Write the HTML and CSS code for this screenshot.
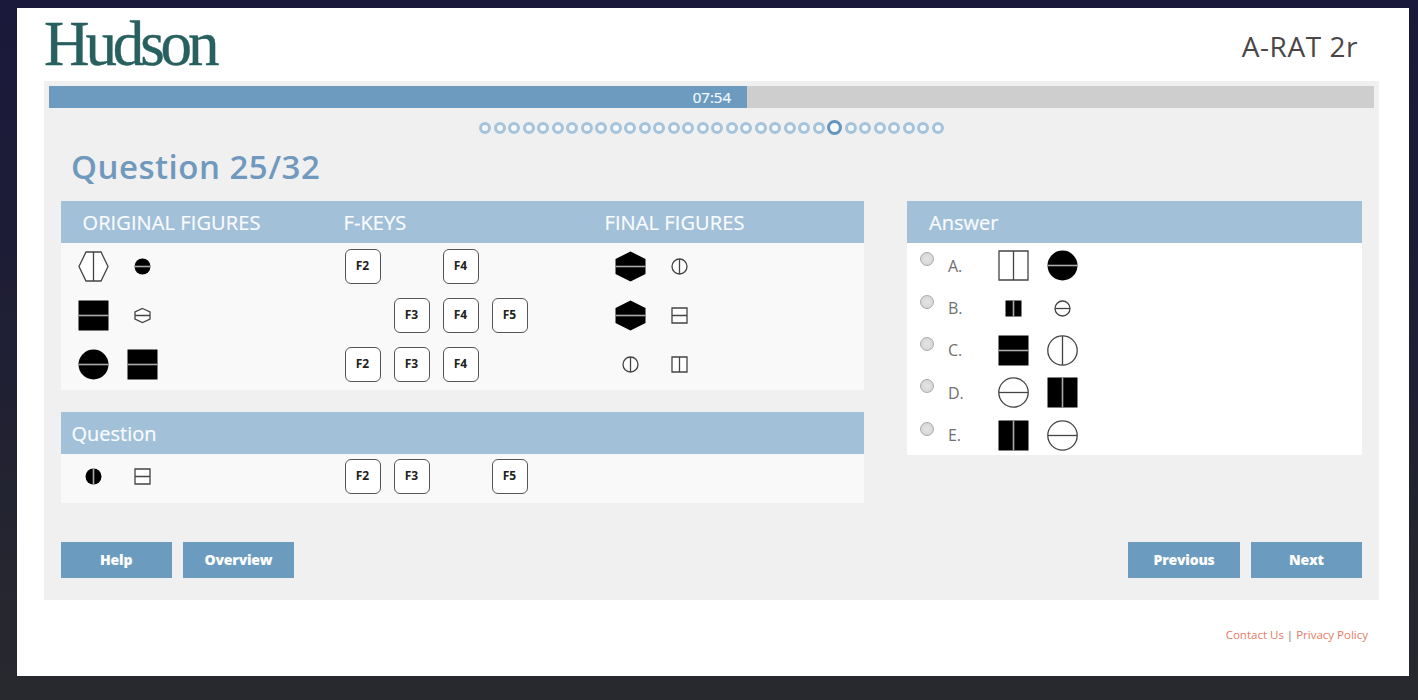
FILE: index.html
```html
<!DOCTYPE html>
<html lang="en">
<head>
<meta charset="utf-8">
<title>A-RAT 2r</title>
<link rel="stylesheet" href="styles.css">
</head>
<body>
<svg class="defs" width="0" height="0" aria-hidden="true">
  <g id="sq-h-fill"><rect x="-15" y="-15" width="30" height="30"/><path class="split" d="M-15 0H15"/></g>
  <g id="sq-v-fill"><rect x="-15" y="-15" width="30" height="30"/><path class="split" d="M0-15V15"/></g>
  <g id="sq-v-fill-s"><rect x="-8" y="-8" width="16" height="16"/><path class="split" d="M0-8V8"/></g>
  <g id="ci-h-fill"><circle r="15"/><path class="split" d="M-15 0H15"/></g>
  <g id="ci-h-fill-s"><circle r="8"/><path class="split" d="M-8 0H8"/></g>
  <g id="ci-v-fill-s"><circle r="8"/><path class="split" d="M0-8V8"/></g>
  <g id="hex-h-fill"><path d="M0-15L15-7.5V7.5L0 15L-15 7.5V-7.5Z"/><path class="split" d="M-15 0H15"/></g>
  <g id="hex-v" class="line"><path d="M-14.5 0L-7.5-14.5H7.5L14.5 0L7.5 14.5H-7.5ZM0-14.5V14.5"/></g>
  <g id="hex-h-s" class="line"><path d="M0-7L7.5-3.5V3.5L0 7L-7.5 3.5V-3.5ZM-7.5 0H7.5"/></g>
  <g id="sq-v" class="line"><path d="M-14.5-14.5H14.5V14.5H-14.5ZM0-14.5V14.5"/></g>
  <g id="sq-h-s" class="line"><path d="M-7.5-7.5H7.5V7.5H-7.5ZM-7.5 0H7.5"/></g>
  <g id="sq-v-s" class="line"><path d="M-7.5-7.5H7.5V7.5H-7.5ZM0-7.5V7.5"/></g>
  <g id="ci-h" class="line"><circle r="14.7"/><path d="M-14.5 0H14.5"/></g>
  <g id="ci-v" class="line"><circle r="14.7"/><path d="M0-14.5V14.5"/></g>
  <g id="ci-h-s" class="line"><circle r="7.5"/><path d="M-7.5 0H7.5"/></g>
  <g id="ci-v-s" class="line"><circle r="7.5"/><path d="M0-7.5V7.5"/></g>
</svg>
<main class="page">
  <header class="top">
    <div class="logo">Hudson</div>
    <div class="test-name">A-RAT 2r</div>
  </header>
  <section class="panel">
    <div class="timer"><div class="timer-fill" style="width:52.68%"><span>07:54</span></div></div>
    <div class="dots">
      <i></i><i></i><i></i><i></i><i></i><i></i><i></i><i></i><i></i><i></i><i></i><i></i>
      <i></i><i></i><i></i><i></i><i></i><i></i><i></i><i></i><i></i><i></i><i></i><i></i>
      <i class="current"></i><i></i><i></i><i></i><i></i><i></i><i></i><i></i>
    </div>
    <h1 class="heading"><span>Question 25/32</span></h1>
    <div class="columns">
      <div class="left">
        <div class="box">
          <div class="box-head cols"><span>ORIGINAL FIGURES</span><span>F-KEYS</span><span>FINAL FIGURES</span></div>
          <div class="row">
            <div class="cells"><svg class="fig" viewBox="-24.5 -24.5 49 49"><use href="#hex-v"/></svg><svg class="fig" viewBox="-24.5 -24.5 49 49"><use href="#ci-h-fill-s"/></svg></div>
            <div class="cells"><kbd class="f2">F2</kbd><kbd class="f4">F4</kbd></div>
            <div class="cells"><svg class="fig" viewBox="-24.5 -24.5 49 49"><use href="#hex-h-fill"/></svg><svg class="fig" viewBox="-24.5 -24.5 49 49"><use href="#ci-v-s"/></svg></div>
          </div>
          <div class="row">
            <div class="cells"><svg class="fig" viewBox="-24.5 -24.5 49 49"><use href="#sq-h-fill"/></svg><svg class="fig" viewBox="-24.5 -24.5 49 49"><use href="#hex-h-s"/></svg></div>
            <div class="cells"><kbd class="f3">F3</kbd><kbd class="f4">F4</kbd><kbd class="f5">F5</kbd></div>
            <div class="cells"><svg class="fig" viewBox="-24.5 -24.5 49 49"><use href="#hex-h-fill"/></svg><svg class="fig" viewBox="-24.5 -24.5 49 49"><use href="#sq-h-s"/></svg></div>
          </div>
          <div class="row">
            <div class="cells"><svg class="fig" viewBox="-24.5 -24.5 49 49"><use href="#ci-h-fill"/></svg><svg class="fig" viewBox="-24.5 -24.5 49 49"><use href="#sq-h-fill"/></svg></div>
            <div class="cells"><kbd class="f2">F2</kbd><kbd class="f3">F3</kbd><kbd class="f4">F4</kbd></div>
            <div class="cells"><svg class="fig" viewBox="-24.5 -24.5 49 49"><use href="#ci-v-s"/></svg><svg class="fig" viewBox="-24.5 -24.5 49 49"><use href="#sq-v-s"/></svg></div>
          </div>
        </div>
        <div class="box">
          <div class="box-head question-head"><span>Question</span></div>
          <div class="row">
            <div class="cells"><svg class="fig" viewBox="-24.5 -24.5 49 49"><use href="#ci-v-fill-s"/></svg><svg class="fig" viewBox="-24.5 -24.5 49 49"><use href="#sq-h-s"/></svg></div>
            <div class="cells"><kbd class="f2">F2</kbd><kbd class="f3">F3</kbd><kbd class="f5">F5</kbd></div>
          </div>
        </div>
      </div>
      <div class="box answers">
        <div class="box-head answer-head"><span>Answer</span></div>
        <label class="option"><i class="radio"></i><span class="letter">A.</span><svg class="fig" viewBox="-24.5 -24.5 49 49"><use href="#sq-v"/></svg><svg class="fig" viewBox="-24.5 -24.5 49 49"><use href="#ci-h-fill"/></svg></label>
        <label class="option"><i class="radio"></i><span class="letter">B.</span><svg class="fig" viewBox="-24.5 -24.5 49 49"><use href="#sq-v-fill-s"/></svg><svg class="fig" viewBox="-24.5 -24.5 49 49"><use href="#ci-h-s"/></svg></label>
        <label class="option"><i class="radio"></i><span class="letter">C.</span><svg class="fig" viewBox="-24.5 -24.5 49 49"><use href="#sq-h-fill"/></svg><svg class="fig" viewBox="-24.5 -24.5 49 49"><use href="#ci-v"/></svg></label>
        <label class="option"><i class="radio"></i><span class="letter">D.</span><svg class="fig" viewBox="-24.5 -24.5 49 49"><use href="#ci-h"/></svg><svg class="fig" viewBox="-24.5 -24.5 49 49"><use href="#sq-v-fill"/></svg></label>
        <label class="option"><i class="radio"></i><span class="letter">E.</span><svg class="fig" viewBox="-24.5 -24.5 49 49"><use href="#sq-v-fill"/></svg><svg class="fig" viewBox="-24.5 -24.5 49 49"><use href="#ci-h"/></svg></label>
      </div>
    </div>
    <div class="actions">
      <button>Help</button><button>Overview</button>
      <button class="push">Previous</button><button>Next</button>
    </div>
  </section>
  <footer class="links"><a>Contact Us</a><span> | </span><a>Privacy Policy</a></footer>
</main>
</body>
</html>
```
FILE: styles.css
```css
* { box-sizing: border-box; }
body {
  margin: 0;
  height: 700px;
  padding: 8px 9px 24px 17px;
  overflow: hidden;
  background: linear-gradient(#1b193b 0%, #1d1c36 35%, #26272f 88%, #28292e 100%);
  font-family: "Open Sans", "Noto Sans", sans-serif;
}
.defs { position: absolute; }
.page { height: 668px; padding: 0 30px 0 27px; background: #fff; }
.top { height: 73px; display: flex; justify-content: space-between; }
.logo {
  font: 63px/72px "Liberation Serif", serif;
  letter-spacing: -4.1px;
  color: #27605f;
  -webkit-text-stroke: .4px #27605f;
}
.test-name {
  padding-right: 21px;
  font-size: 28px;
  line-height: 77px;
  letter-spacing: .55px;
  color: #4b4647;
}
.panel { height: 519px; padding: 5px; background: #f0f0f0; }
.timer { height: 22px; background: #cecece; }
.timer-fill { height: 22px; padding-right: 16px; background: #6d9bc0; text-align: right; }
.timer-fill span { display: block; color: #f4fbff; font-size: 15px; line-height: 23px; -webkit-text-stroke: .2px #f4fbff; }
.dots { height: 39px; display: flex; justify-content: center; align-items: center; gap: 2.5px; }
.dots i { width: 12px; height: 12px; border: 3px solid #a5c3da; border-radius: 50%; background: #f5f9fc; }
.dots .current { width: 15px; height: 15px; border: 3px solid #6495bc; }
.heading { margin: 0; height: 54px; padding-left: 22px; font-size: 33px; line-height: 40px; font-weight: 600; letter-spacing: .5px; color: #7099bd; }
.columns { display: flex; justify-content: space-between; padding: 0 12px 0 11.5px; }
.left { width: 803.5px; display: flex; flex-direction: column; gap: 22px; }
.box { background: #f9f9f9; }
.box-head { height: 42px; background: #a3c0d9; color: #f9fcff; font-size: 20px; line-height: 43px; letter-spacing: .1px; -webkit-text-stroke: .2px #f9fcff; }
.cols, .row { display: grid; grid-template-columns: 261px 261px 1fr; }
.cols { padding-left: 22px; }
.question-head { height: 41.5px; padding-left: 11px; letter-spacing: 0; }
.answer-head { padding-left: 22px; letter-spacing: 0; }
.row { height: 49px; padding-left: 8.5px; grid-template-columns: 269px 267.5px 1fr; }
.cells { display: grid; grid-template-columns: repeat(4, 49px); grid-template-rows: 46px; justify-items: center; align-items: center; height: 46px; }
.fig { display: block; width: 49px; height: 46px; flex: none; overflow: visible; }
.cells .fig { height: 49px; margin: -1.5px 0; }
.split { stroke: #aaa; stroke-width: 1.6; }
.line { fill: #fff; stroke: #444; stroke-width: 1.3; }
kbd {
  grid-row: 1;
  width: 36px; height: 35px;
  border: 1.5px solid #555; border-radius: 6px;
  background: #fff; color: #222;
  font: 700 12px/31px "Open Sans", sans-serif;
  text-align: center;
}
.f2 { grid-column: 1; } .f3 { grid-column: 2; } .f4 { grid-column: 3; } .f5 { grid-column: 4; }
.answers { width: 455px; height: 254px; background: #fff; }
.option { height: 42.4px; display: flex; align-items: center; padding: 3px 0 0 13px; }
.option .fig { height: 49px; }
.radio { width: 14px; height: 14px; margin-bottom: 13px; border: 1px solid #aaa; border-radius: 50%; background: radial-gradient(#e4e4e4, #d2d2d2); }
.letter { width: 54.5px; padding-left: 14px; font-size: 16px; letter-spacing: -.2px; color: #707070; }
.actions { display: flex; gap: 11px; padding: 39px 12px 0 11.5px; }
button { width: 111.3px; height: 36px; padding: 0; border: 0; background: #6c9bc0; color: #fff; font: 800 14px/36px "Open Sans", sans-serif; letter-spacing: -.2px; }
.push { margin-left: auto; }
.links { padding: 26px 11px 0 0; text-align: right; font-size: 11.5px; line-height: 18px; color: #777; }
.links a { color: #e47a64; }
```
